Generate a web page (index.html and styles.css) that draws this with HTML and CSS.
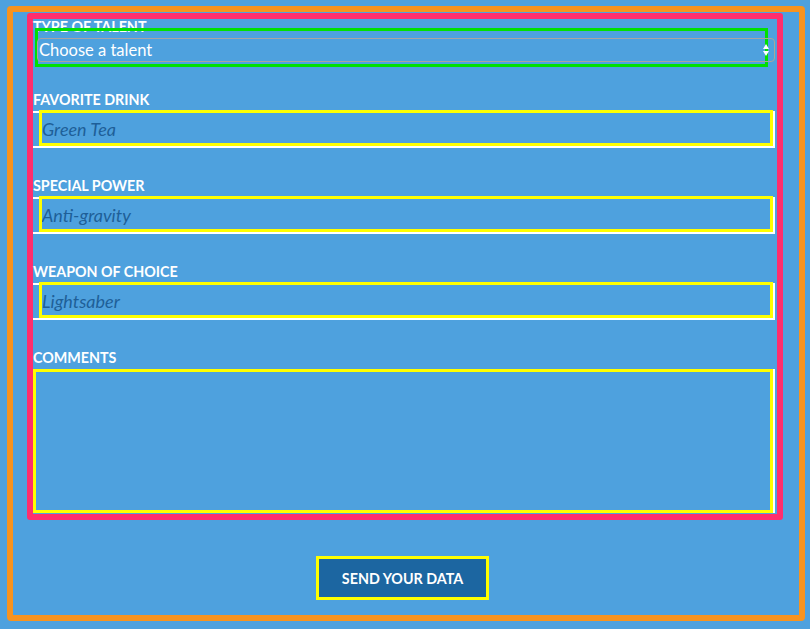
FILE: index.html
```html
<!DOCTYPE html>
<html>
<head>
<meta charset="utf-8">
<link rel="stylesheet" href="styles.css">
</head>
<body>
<div class="frame">
  <form class="panel">
    <label class="label first">Type of talent</label>
    <div class="select-wrap">
      <select class="select">
        <option>Choose a talent</option>
      </select>
      <svg class="arrows" width="6" height="12" viewBox="0 0 6 12"><path d="M3 0 L6 5 L0 5 Z M0 7 L6 7 L3 12 Z" fill="#fff"/></svg>
    </div>

    <label class="label after-select">Favorite drink</label>
    <div class="input"><div class="inner">Green Tea</div></div>

    <label class="label">Special power</label>
    <div class="input"><div class="inner">Anti-gravity</div></div>

    <label class="label">Weapon of choice</label>
    <div class="input"><div class="inner">Lightsaber</div></div>

    <label class="label">Comments</label>
    <div class="textarea"><div class="tinner"></div></div>
  </form>
  <div class="actions">
    <button class="send" type="button">Send your data</button>
  </div>
</div>
</body>
</html>
```

FILE: styles.css
```css
* { box-sizing: border-box; }
html, body { margin: 0; padding: 0; }
body {
  background: #4ea1de;
  width: 810px;
  height: 629px;
  overflow: hidden;
  font-family: Lato, "Open Sans", sans-serif;
  padding: 6px 0 0 7px;
}
.frame {
  width: 798px;
  height: 615px;
  border: 6px solid #f7931f;
  border-radius: 4px;
  padding: 1px 0 0 14px;
}
.panel {
  display: block;
  width: 756px;
  height: 507px;
  border: 6px solid #ff2e6e;
  border-radius: 3px;
  margin: 0;
}
.label {
  display: block;
  color: #fff;
  font-weight: 700;
  font-size: 14.3px;
  line-height: 13px;
  text-transform: uppercase;
  margin-top: 31px;
  height: 13px;
}
.label.first { margin-top: 1px; }
.label.after-select { margin-top: 26px; }
.select-wrap {
  position: relative;
  margin: -5px 0 0 2px;
  width: 733px;
  height: 39px;
  border: 3px solid #00e000;
  padding-top: 7px;
}
.select {
  -webkit-appearance: none;
  appearance: none;
  display: block;
  margin-left: -1px;
  width: 738px;
  height: 24px;
  background: transparent;
  border: 1px solid #a9a59e;
  border-radius: 4px;
  color: #fff;
  font-family: Lato, sans-serif;
  font-size: 16.5px;
  line-height: 20px;
  padding: 0 0 0 1px;
  outline: none;
}
.arrows {
  position: absolute;
  left: 725px;
  top: 13px;
}
.label + .input, .label + .textarea { margin-top: 5px; }
.input {
  width: 742px;
  height: 37px;
  border-top: 2px solid #fff;
  border-right: 2px solid #fff;
  border-bottom: 2px solid #fff;
}
.inner {
  margin: -3px 0 0 6px;
  width: 734px;
  height: 36px;
  border: 3px solid #ffff00;
  color: #1e5f98;
  font-style: italic;
  font-size: 18px;
  line-height: 32px;
  padding-left: 0;
  overflow: hidden;
}
.textarea {
  width: 742px;
  height: 144px;
  border-right: 2px solid #fff;
}
.tinner {
  width: 740px;
  height: 144px;
  border: 3px solid #ffff00;
}
.actions {
  padding: 36px 0 0 289px;
}
.send {
  display: block;
  width: 173px;
  height: 44px;
  border: 3px solid #ffff00;
  background: #1c66a1;
  color: #fff;
  font-family: Lato, sans-serif;
  font-weight: 700;
  font-size: 14.3px;
  text-transform: uppercase;
  padding: 0;
  margin: 0;
  cursor: pointer;
}
```
